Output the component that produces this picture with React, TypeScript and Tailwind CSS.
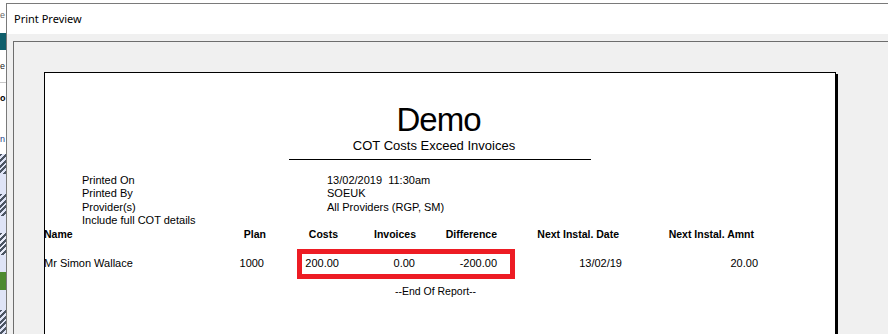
import React from 'react';

const INFO = [
  { label: 'Printed On', value: '13/02/2019  11:30am' },
  { label: 'Printed By', value: 'SOEUK' },
  { label: 'Provider(s)', value: 'All Providers (RGP, SM)' },
  { label: 'Include full COT details', value: '' },
];

function DesktopStrip() {
  // sliver of the app sitting behind the dialog
  return (
    <div className="w-[6px] shrink-0 h-full overflow-hidden flex flex-col bg-white font-['Liberation_Sans',sans-serif]">
      <div className="h-[9px]" />
      <div className="h-[12px] text-[9px] leading-[12px] text-[#666]">e</div>
      <div className="h-[12px]" />
      <div className="h-[17px] bg-[#0f5e6b]" />
      <div className="h-[8px]" />
      <div className="h-[17px] text-[9px] leading-[17px] text-[#222]">e</div>
      <div className="h-[7px]" />
      <div className="h-px bg-[#c8c8c8]" />
      <div className="h-[6px]" />
      <div className="h-[18px] text-[9px] font-bold leading-[18px] text-black">o</div>
      <div className="h-[22px]" />
      <div className="h-[20px] text-[9px] leading-[20px] text-[#1e3a8a]">n</div>
      <div className="h-[5px]" />
      <div className="h-[20px] bg-[repeating-linear-gradient(135deg,#4b5563_0px,#4b5563_2px,#dfe4f7_2px,#dfe4f7_4px)]" />
      <div className="h-[20px] bg-[#dfe4f7]" />
      <div className="h-[22px] bg-[repeating-linear-gradient(135deg,#4b5563_0px,#4b5563_2px,#dfe4f7_2px,#dfe4f7_4px)]" />
      <div className="h-[17px] bg-[#dfe4f7]" />
      <div className="h-[22px] bg-[repeating-linear-gradient(135deg,#4b5563_0px,#4b5563_2px,#e9ecf9_2px,#e9ecf9_4px)]" />
      <div className="h-[17px] bg-[#dfe4f7]" />
      <div className="h-[18px] bg-[#4d8a2f]" />
      <div className="h-[20px] bg-[#dfe4f7]" />
      <div className="h-[24px] bg-[repeating-linear-gradient(135deg,#4b5563_0px,#4b5563_2px,#dfe4f7_2px,#dfe4f7_4px)]" />
    </div>
  );
}

function ReportPage() {
  return (
    <div className="relative w-[792px] h-[400px] shrink-0 bg-white border border-black shadow-[2px_2px_0_#000] font-['Liberation_Sans',Arial,sans-serif] text-black">
      {/* Title */}
      <div className="pt-[30px] pr-[3px] text-center text-[33px] leading-[34px] tracking-[-1px]">Demo</div>
      <div className="mt-px pr-[12px] text-center text-[13px] leading-[16px]">COT Costs Exceed Invoices</div>
      <div className="mt-[5px] mx-auto w-[302px] h-px bg-black" />

      {/* Parameters */}
      <div className="mt-[14px] pl-[37px] grid grid-cols-[245px_auto] text-[11px] leading-[13.3px]">
        {INFO.map((row) => (
          <React.Fragment key={row.label}>
            <div className="whitespace-pre">{row.label}</div>
            <div className="whitespace-pre">{row.value}</div>
          </React.Fragment>
        ))}
      </div>

      {/* Column headers */}
      <div className="mt-[1px] -ml-px flex text-[10.5px] leading-[13px] font-bold">
        <div className="w-[186px]">Name</div>
        <div className="w-[36px] text-right">Plan</div>
        <div className="w-[72px] text-right">Costs</div>
        <div className="w-[78px] text-right">Invoices</div>
        <div className="w-[81px] text-right">Difference</div>
        <div className="w-[122px] text-right">Next Instal. Date</div>
        <div className="w-[135px] text-right">Next Instal. Amnt</div>
      </div>

      {/* Detail row */}
      <div className="mt-[16px] -ml-px flex text-[11px] leading-[13px]">
        <div className="w-[186px]">Mr Simon Wallace</div>
        <div className="w-[34px] text-right">1000</div>
        <div className="w-[75px] text-right">200.00</div>
        <div className="w-[76px] text-right">0.00</div>
        <div className="w-[82px] text-right">-200.00</div>
        <div className="w-[125px] text-right">13/02/19</div>
        <div className="w-[136px] text-right">20.00</div>
      </div>

      <div className="mt-[15px] pr-[9px] text-center text-[10.5px] leading-[13px]">--End Of Report--</div>

      {/* highlight annotation */}
      <div className="absolute left-[252px] top-[176px] w-[218px] h-[30px] border-[5px] border-[#ed1c24]" />
    </div>
  );
}

export default function App() {
  return (
    <div className="w-[888px] h-[334px] overflow-hidden bg-white flex">
      <DesktopStrip />

      {/* Print Preview window */}
      <div className="flex-1 mt-[3px] flex flex-col border-l border-t border-[#7a7a7a]">
        <div className="h-[30px] shrink-0 flex items-center pl-[7px] bg-white font-['Noto_Sans',sans-serif] text-[11px] text-black">
          Print Preview
        </div>
        <div className="flex-1 bg-[#f0f0f0] pt-[7px] pl-[6px] flex flex-col">
          <div className="flex-1 border-l border-t border-[#6d6d6d] pl-[30px] pt-[30px] overflow-hidden">
            <ReportPage />
          </div>
        </div>
      </div>
    </div>
  );
}
